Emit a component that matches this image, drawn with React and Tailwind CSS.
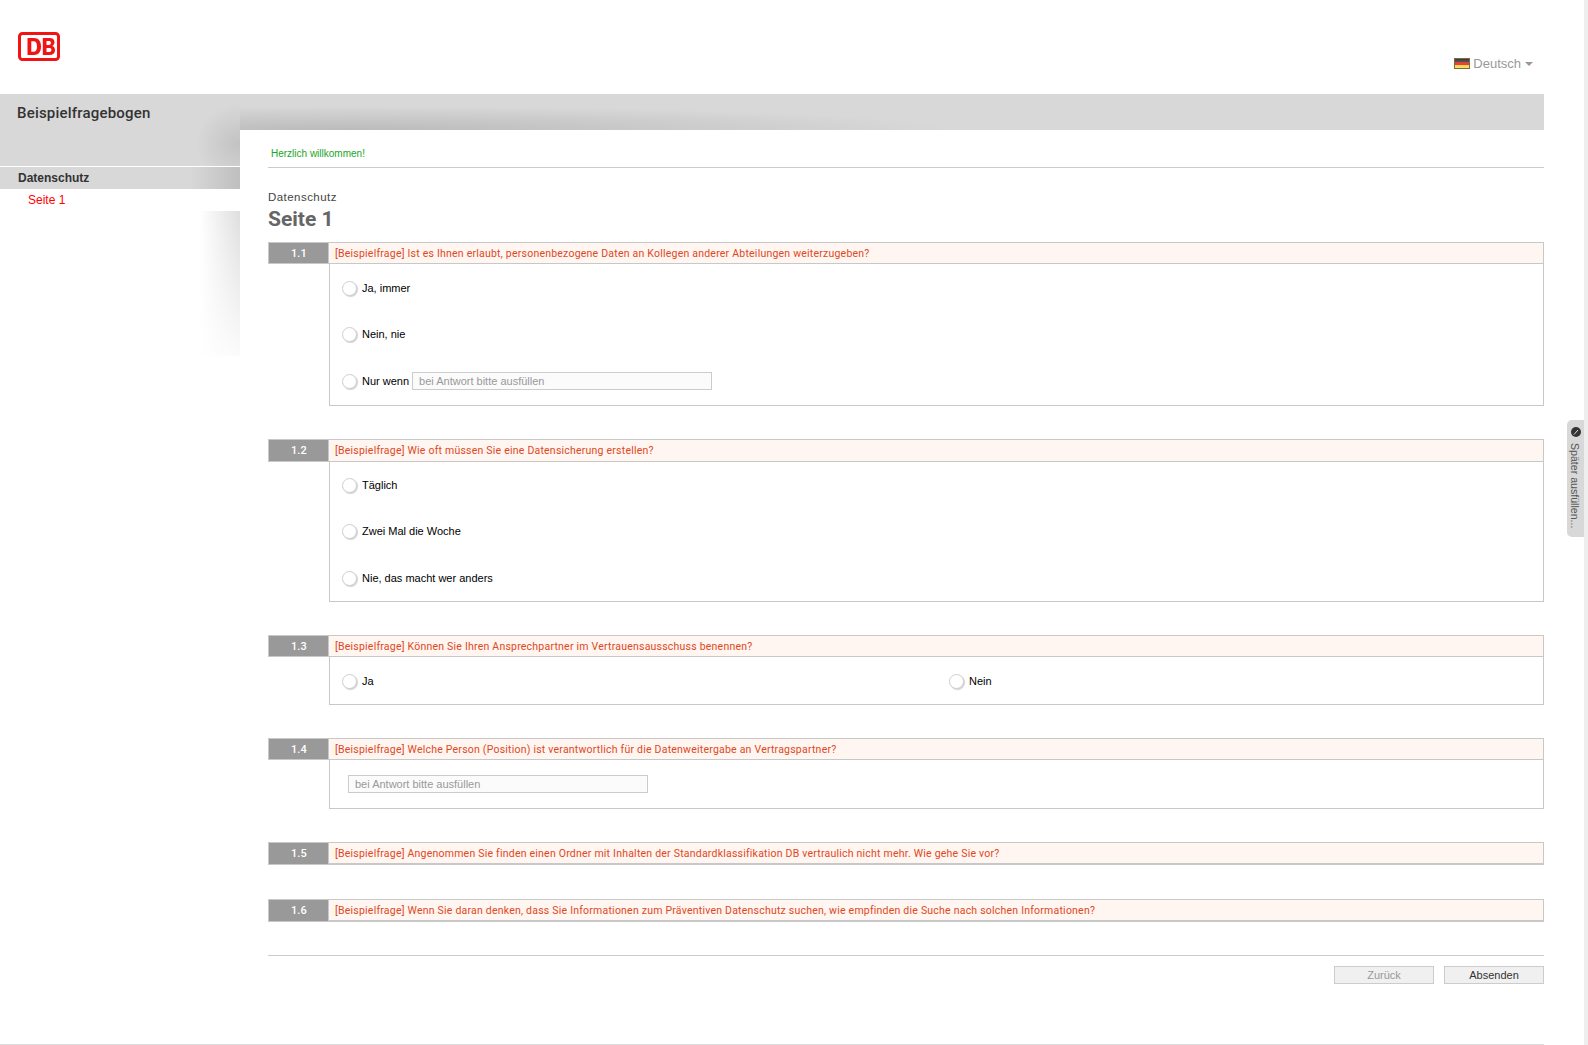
import { useState } from 'react'

const questions = [
  {
    num: '1.1',
    text: 'Ist es Ihnen erlaubt, personenbezogene Daten an Kollegen anderer Abteilungen weiterzugeben?',
    options: ['Ja, immer', 'Nein, nie', 'Nur wenn'],
    inputOn: 'Nur wenn',
    gap: 'mb-[33px]',
    head: 'h-[22px]',
    numPad: 'pt-[2px]',
    pad: 'pt-[17px] pb-[16px]',
  },
  {
    num: '1.2',
    text: 'Wie oft müssen Sie eine Datensicherung erstellen?',
    options: ['Täglich', 'Zwei Mal die Woche', 'Nie, das macht wer anders'],
    gap: 'mb-[33px]',
    head: 'h-[23px]',
    numPad: 'pt-[1px]',
    pad: 'pt-[16px] pb-[15px]',
  },
  {
    num: '1.3',
    text: 'Können Sie Ihren Ansprechpartner im Vertrauensausschuss benennen?',
    columns: ['Ja', 'Nein'],
    gap: 'mb-[33px]',
    head: 'h-[22px]',
    numPad: 'pt-[2px]',
  },
  {
    num: '1.4',
    text: 'Welche Person (Position) ist verantwortlich für die Datenweitergabe an Vertragspartner?',
    freeText: true,
    gap: 'mb-[33px]',
    head: 'h-[22px]',
    numPad: 'pt-[2px]',
  },
  {
    num: '1.5',
    text: 'Angenommen Sie finden einen Ordner mit Inhalten der Standardklassifikation DB vertraulich nicht mehr. Wie gehe Sie vor?',
    gap: 'mb-[34px]',
    head: 'h-[23px]',
    numPad: 'pt-[1px]',
  },
  {
    num: '1.6',
    text: 'Wenn Sie daran denken, dass Sie Informationen zum Präventiven Datenschutz suchen, wie empfinden die Suche nach solchen Informationen?',
    gap: 'mb-[33px]',
    head: 'h-[23px]',
    numPad: 'pt-[1px]',
  },
]

const labelFont = "font-['Roboto',sans-serif]"

function Radio({ checked, onClick }) {
  return (
    <button
      type="button"
      onClick={onClick}
      className="w-[15px] h-[15px] shrink-0 rounded-full border border-[#cfcfcf] bg-white shadow-[1px_1px_1px_rgba(0,0,0,0.18)]"
    >
      {checked && <span className="block w-[7px] h-[7px] m-auto rounded-full bg-[#555]" />}
    </button>
  )
}

function AnswerInput() {
  return (
    <input
      placeholder="bei Antwort bitte ausfüllen"
      className="w-[300px] h-[18px] px-[6px] border border-[#ccc] bg-[#fbfbfb] text-[11px] text-[#999] placeholder:text-[#999] outline-none"
    />
  )
}

function Question({ q }) {
  const [value, setValue] = useState(null)
  const hasBody = q.options || q.columns || q.freeText

  return (
    <div className={q.gap}>
      <div className={`flex ${q.head}`}>
        <div className={`w-[61px] shrink-0 pl-[1px] bg-[#999] border border-[#c8c8c8] flex items-center justify-center text-white text-[11px] font-medium tracking-[0.2px] ${labelFont} ${q.numPad}`}>
          {q.num}
        </div>
        <div
          className={`flex-1 flex items-center pl-[6px] pt-[1px] bg-[#fff5f1] border-t border-r border-[#c8c8c8] text-[#e0481c] text-[10.5px] tracking-[0.22px] whitespace-nowrap ${labelFont} ${hasBody ? 'border-b' : 'border-b-2'}`}
        >
          [Beispielfrage] {q.text}
        </div>
      </div>
      {hasBody && (
        <div className="ml-[61px] border-l border-r border-b border-[#c8c8c8]">
          {q.options && (
            <div className={`flex flex-col gap-[31px] pl-[12px] ${q.pad}`}>
              {q.options.map(o => (
                <div key={o} className="flex items-center h-[15px] last:mt-[1px]">
                  <Radio checked={value === o} onClick={() => setValue(o)} />
                  <span className="ml-[5px] text-[11px] text-black">{o}</span>
                  {q.inputOn === o && <span className="ml-[3px] mb-[2px] flex"><AnswerInput /></span>}
                </div>
              ))}
            </div>
          )}
          {q.columns && (
            <div className="grid grid-cols-[607px_1fr] pt-[17px] pb-[15px] pl-[12px]">
              {q.columns.map(o => (
                <div key={o} className="flex items-center h-[15px]">
                  <Radio checked={value === o} onClick={() => setValue(o)} />
                  <span className="ml-[5px] text-[11px] text-black">{o}</span>
                </div>
              ))}
            </div>
          )}
          {q.freeText && (
            <div className="pt-[15px] pb-[15px] pl-[18px] flex">
              <AnswerInput />
            </div>
          )}
        </div>
      )}
    </div>
  )
}

function DbLogo() {
  return (
    <svg width="42" height="29" viewBox="0 0 42 29">
      <rect x="1.500" y="1.500" width="39" height="26" rx="3" fill="#fff" stroke="#f01414" strokeWidth="3" />
      <path fill="#f01414" fillRule="evenodd" d="M9.500 6h6.500c4.500 0 7 3 7 8.500s-2.500 8.500-7 8.500h-6.500zM13.300 9.300v10.400h2.200c2.400 0 3.500-1.700 3.500-5.200s-1.100-5.200-3.500-5.200z" />
      <path fill="#f01414" fillRule="evenodd" d="M24.800 6h6.600c3.300 0 5.100 1.500 5.100 4.300 0 1.800-.9 3.200-2.400 3.800 1.900.6 2.900 2 2.900 4.100 0 3.100-2 4.800-5.600 4.800h-6.600zM28.500 9.100v3.900h2.400c1.300 0 2-.7 2-2s-.7-1.900-2-1.900zM28.500 16v3.900h2.700c1.500 0 2.200-.7 2.200-2s-.7-1.900-2.200-1.900z" />
    </svg>
  )
}

function FlagDe() {
  return (
    <span className="flex w-4 h-[11px] border border-[#7d6a3a] bg-[linear-gradient(to_bottom,#3a3a3a_0%,#555_30%,#e8403a_40%,#e8403a_65%,#f6d545_72%,#f6e27a_100%)]" />
  )
}

export default function App() {
  return (
    <div className="relative w-[1588px] h-[1045px] overflow-hidden bg-white font-['Liberation_Sans',sans-serif]">
      <div className="w-[1544px] border-b border-[#ddd] h-[1045px]">
        {/* Header */}
        <header className="h-[94px] flex justify-between pl-[18px] pr-[11px]">
          <div className="pt-[32px]"><DbLogo /></div>
          <button className="self-start mt-[54px] flex items-center gap-[3px] text-[13px] text-[#999]">
            <FlagDe />
            Deutsch
            <span className="ml-[1px] w-0 h-0 border-l-[4px] border-r-[4px] border-t-[4px] border-l-transparent border-r-transparent border-t-[#999]" />
          </button>
        </header>

        <div className="flex">
          {/* Sidebar */}
          <aside className="w-[240px] shrink-0">
            <div className="h-[72px] bg-[radial-gradient(ellipse_44px_40px_at_100%_50px,#c2c2c2,#d8d8d8)] pl-[17px] pt-[9px]">
              <h1 className={`text-[15px] leading-[20px] font-medium tracking-[0.2px] text-[#333] ${labelFont}`}>Beispielfragebogen</h1>
            </div>
            <div className="h-[1px] bg-white" />
            <div className="h-[22px] flex items-center pl-[18px] bg-[linear-gradient(to_right,#d8d8d8_190px,#bfbfbf_240px)] text-[12px] font-bold text-[#333]">
              Datenschutz
            </div>
            <div className="h-[22px] flex items-center pl-[28px] text-[12px] text-[#f00]">Seite 1</div>
            <div className="h-[145px] bg-[linear-gradient(to_bottom,transparent,#ffffffe0),linear-gradient(to_right,#fff_200px,#dedede_240px)]" />
          </aside>

          {/* Main */}
          <main className="flex-1 min-w-0">
            <div className="h-[36px] bg-[radial-gradient(ellipse_600px_24px_at_110px_100%,#bbb,#d8d8d8)]" />
            <div className="pl-[28px]">
              <div className="h-[38px] border-b border-[#ccc] pl-[3px] pt-[17px] text-[10px] leading-[13px] text-[#19a51e]">
                Herzlich willkommen!
              </div>
              <p className="mt-[22px] text-[11.500px] leading-[15px] tracking-[0.45px] text-[#444]">Datenschutz</p>
              <h2 className={`mb-[9px] text-[21px] leading-[28px] font-bold text-[#666] ${labelFont}`}>Seite 1</h2>

              {questions.map(q => <Question key={q.num} q={q} />)}

              <div className="border-t border-[#ccc] pt-[10px] flex justify-end gap-[10px]">
                <button disabled className="w-[100px] h-[18px] bg-[#f0f0f0] border border-[#ccc] text-[11px] text-[#999]">Zurück</button>
                <button className="w-[100px] h-[18px] bg-[#f0f0f0] border border-[#ccc] text-[11px] text-[#333]">Absenden</button>
              </div>
            </div>
          </main>
        </div>
      </div>

      {/* Side tab */}
      <div className="absolute left-[1567px] top-[420px] w-[17px] h-[117px] rounded-l-[5px] bg-[#d8d8d8] flex flex-col items-center pt-[7px] gap-[6px]">
        <svg width="10" height="10" viewBox="0 0 10 10" className="shrink-0">
          <circle cx="5" cy="5" r="5" fill="#333" />
          <path d="M3 7.500 7 3" stroke="#ddd" strokeWidth="1" />
        </svg>
        <span className="mr-[1px] [writing-mode:vertical-rl] text-[10.6px] leading-none text-[#555] whitespace-nowrap">Später ausfüllen...</span>
      </div>
      <div className="absolute right-0 top-0 bottom-0 w-[4px] bg-[#eee]" />
    </div>
  )
}
